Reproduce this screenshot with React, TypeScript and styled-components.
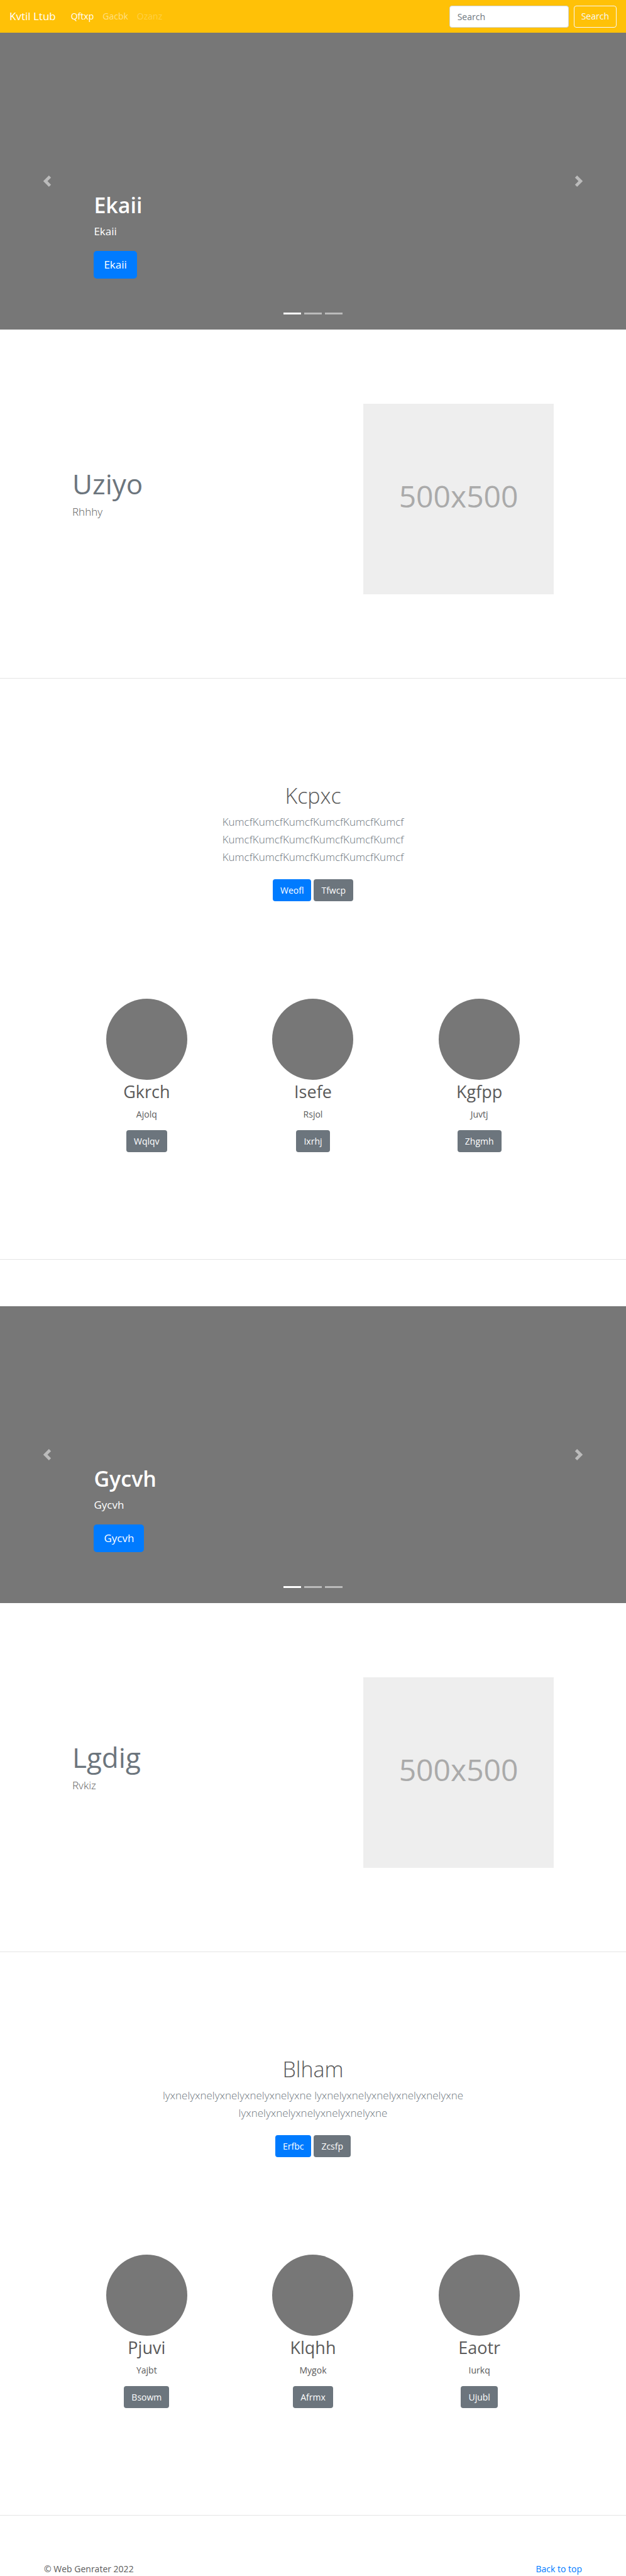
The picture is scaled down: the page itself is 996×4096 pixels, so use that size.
import React from "react";
import styled, { createGlobalStyle } from "styled-components";

const GlobalStyle = createGlobalStyle`
  *, *::before, *::after { box-sizing: border-box; }
  body {
    margin: 0;
    background: #fff;
    color: #5a5a5a;
    font-family: "Open Sans", "Noto Sans", sans-serif;
    font-size: 14px;
    line-height: 22px;
  }
  h1, h2, p { margin: 0; }
  a { text-decoration: none; }
`;

const Navbar = styled.header`
  display: flex;
  align-items: center;
  justify-content: space-between;
  height: 52px;
  padding: 0 15px;
  background: #ffc107;
`;

const NavStart = styled.nav`
  display: flex;
  align-items: center;
  gap: 24px;
`;

const Brand = styled.a`
  color: #fff;
  font-size: 17px;
  line-height: 28px;
`;

const NavLinks = styled.ul`
  display: flex;
  gap: 14px;
  margin: 0;
  padding: 0;
  list-style: none;
`;

const NavLink = styled.a<{ $opacity: number }>`
  color: rgba(255, 255, 255, ${(p) => p.$opacity});
`;

const SearchForm = styled.form`
  display: flex;
  gap: 8px;
`;

const SearchInput = styled.input`
  width: 190px;
  height: 35px;
  padding: 0 12px;
  border: 1px solid #ced4da;
  border-radius: 4px;
  background: #fff;
  color: #495057;
  font: inherit;

  &::placeholder {
    color: #6c757d;
    opacity: 1;
  }
`;

const SearchButton = styled.button`
  height: 35px;
  padding: 0 11px;
  border: 1px solid #f8f9fa;
  border-radius: 4px;
  background: transparent;
  color: #f8f9fa;
  font: inherit;
`;

const Hero = styled.section`
  position: relative;
  display: flex;
  align-items: flex-end;
  height: 472px;
  padding: 0 15% 81px;
  background: #777;
  color: #fff;
`;

const HeroTitle = styled.h1`
  margin-bottom: 6px;
  font-size: 34px;
  font-weight: 600;
  line-height: 44px;
`;

const HeroText = styled.p`
  margin-bottom: 17px;
  font-size: 17px;
  line-height: 28px;
`;

const Arrow = styled.button<{ $side: "left" | "right" }>`
  position: absolute;
  top: 0;
  bottom: 0;
  ${(p) => p.$side}: 0;
  display: flex;
  align-items: center;
  justify-content: center;
  width: 15%;
  padding: 0;
  border: 0;
  background: none;
  color: #fff;
  opacity: 0.5;
`;

const Indicators = styled.div`
  position: absolute;
  right: 0;
  bottom: 24px;
  left: 0;
  display: flex;
  justify-content: center;
  gap: 5px;
`;

const Indicator = styled.button<{ $active: boolean }>`
  width: 28px;
  height: 3px;
  padding: 0;
  border: 0;
  background: #fff;
  opacity: ${(p) => (p.$active ? 1 : 0.5)};
`;

const ActionLink = styled.a<{ $tone?: "primary" | "secondary"; $large?: boolean }>`
  display: inline-block;
  padding: ${(p) => (p.$large ? "8px 16px" : "6px 12px")};
  border-radius: ${(p) => (p.$large ? 5 : 4)}px;
  background: ${(p) => (p.$tone === "secondary" ? "#6c757d" : "#007bff")};
  color: #fff;
  font-size: ${(p) => (p.$large ? 17 : 14)}px;
  line-height: ${(p) => (p.$large ? 28 : 23)}px;
`;

const Container = styled.div`
  max-width: 794px;
  margin: 0 auto;
`;

const Feature = styled(Container).attrs({ as: "section" })`
  display: grid;
  grid-template-columns: minmax(0, 7fr) minmax(0, 5fr);
  align-items: center;
  padding: 118px 0 133px;
`;

const FeatureCopy = styled.div`
  padding: 0 14px 18px;
`;

const FeatureTitle = styled.h2`
  margin-bottom: 3px;
  color: #6c757d;
  font-size: 44px;
  font-weight: 400;
  line-height: 56px;
`;

const FeatureText = styled.p`
  font-size: 17px;
  font-weight: 300;
  line-height: 28px;
`;

const FeatureMedia = styled.div`
  padding: 0 14px;
`;

const Placeholder = styled.div`
  display: flex;
  align-items: center;
  justify-content: center;
  padding-bottom: 8px;
  aspect-ratio: 1;
  background: #eee;
  color: #aaa;
  font-size: 48px;
  line-height: 56px;
`;

const Divider = styled.hr`
  height: 1px;
  margin: 0;
  border: 0;
  background: #e5e5e5;
`;

const Intro = styled.section`
  max-width: 530px;
  margin: 0 auto;
  padding: 164px 0 155px;
  text-align: center;
`;

const IntroTitle = styled.h2`
  margin-bottom: 6px;
  font-size: 34px;
  font-weight: 300;
  line-height: 44px;
`;

const IntroText = styled.p`
  margin-bottom: 21px;
  color: #6c757d;
  font-size: 17px;
  font-weight: 300;
  line-height: 28px;
`;

const IntroActions = styled.div`
  display: flex;
  justify-content: center;
  gap: 4px;
`;

const Cards = styled(Container).attrs({ as: "section" })`
  display: grid;
  grid-template-columns: repeat(3, minmax(0, 1fr));
  padding-bottom: 170px;
`;

const Card = styled.article`
  display: flex;
  flex-direction: column;
  align-items: center;
  text-align: center;
`;

const Avatar = styled.div`
  width: 129px;
  height: 129px;
  border-radius: 50%;
  background: #777;
`;

const CardTitle = styled.h2`
  margin-bottom: 7px;
  font-size: 27px;
  font-weight: 400;
  line-height: 37px;
`;

const CardText = styled.p`
  margin-bottom: 14px;
`;

const Closing = styled.div`
  padding-bottom: 74px;
`;

const Footer = styled.footer`
  display: flex;
  justify-content: space-between;
  max-width: 856px;
  margin: 0 auto;
`;

const FooterLink = styled.a`
  color: #007bff;
`;

interface Block {
  hero: string;
  feature: { title: string; text: string };
  intro: { title: string; text: string; primary: string; secondary: string };
  cards: { title: string; text: string; action: string }[];
}

const blocks: Block[] = [
  {
    hero: "Ekaii",
    feature: { title: "Uziyo", text: "Rhhhy" },
    intro: {
      title: "Kcpxc",
      text: "KumcfKumcfKumcfKumcfKumcfKumcf KumcfKumcfKumcfKumcfKumcfKumcf KumcfKumcfKumcfKumcfKumcfKumcf",
      primary: "Weofl",
      secondary: "Tfwcp",
    },
    cards: [
      { title: "Gkrch", text: "Ajolq", action: "Wqlqv" },
      { title: "Isefe", text: "Rsjol", action: "Ixrhj" },
      { title: "Kgfpp", text: "Juvtj", action: "Zhgmh" },
    ],
  },
  {
    hero: "Gycvh",
    feature: { title: "Lgdig", text: "Rvkiz" },
    intro: {
      title: "Blham",
      text: "lyxnelyxnelyxnelyxnelyxnelyxne lyxnelyxnelyxnelyxnelyxnelyxne lyxnelyxnelyxnelyxnelyxnelyxne",
      primary: "Erfbc",
      secondary: "Zcsfp",
    },
    cards: [
      { title: "Pjuvi", text: "Yajbt", action: "Bsowm" },
      { title: "Klqhh", text: "Mygok", action: "Afrmx" },
      { title: "Eaotr", text: "Iurkq", action: "Ujubl" },
    ],
  },
];

const chevrons = {
  left: "M5.25 0l-4 4 4 4 1.5-1.5-2.5-2.5 2.5-2.5-1.5-1.5z",
  right: "M2.75 0l-1.5 1.5 2.5 2.5-2.5 2.5 1.5 1.5 4-4-4-4z",
};

function Chevron({ side }: { side: "left" | "right" }) {
  return (
    <svg width="18" height="18" viewBox="0 0 8 8" fill="currentColor" aria-hidden="true">
      <path d={chevrons[side]} />
    </svg>
  );
}

function Carousel({ label }: { label: string }) {
  return (
    <Hero>
      <div>
        <HeroTitle>{label}</HeroTitle>
        <HeroText>{label}</HeroText>
        <ActionLink href="#" $large>{label}</ActionLink>
      </div>
      <Arrow type="button" $side="left" aria-label="Previous"><Chevron side="left" /></Arrow>
      <Arrow type="button" $side="right" aria-label="Next"><Chevron side="right" /></Arrow>
      <Indicators>
        {[0, 1, 2].map((i) => (
          <Indicator key={i} type="button" $active={i === 0} aria-label={`Slide ${i + 1}`} />
        ))}
      </Indicators>
    </Hero>
  );
}

function PageBlock({ block }: { block: Block }) {
  const { hero, feature, intro, cards } = block;
  return (
    <>
      <Carousel label={hero} />
      <Feature>
        <FeatureCopy>
          <FeatureTitle>{feature.title}</FeatureTitle>
          <FeatureText>{feature.text}</FeatureText>
        </FeatureCopy>
        <FeatureMedia>
          <Placeholder>500x500</Placeholder>
        </FeatureMedia>
      </Feature>
      <Divider />
      <Intro>
        <IntroTitle>{intro.title}</IntroTitle>
        <IntroText>{intro.text}</IntroText>
        <IntroActions>
          <ActionLink href="#">{intro.primary}</ActionLink>
          <ActionLink href="#" $tone="secondary">{intro.secondary}</ActionLink>
        </IntroActions>
      </Intro>
      <Cards>
        {cards.map((card) => (
          <Card key={card.title}>
            <Avatar />
            <CardTitle>{card.title}</CardTitle>
            <CardText>{card.text}</CardText>
            <ActionLink href="#" $tone="secondary">{card.action}</ActionLink>
          </Card>
        ))}
      </Cards>
      <Closing>
        <Divider />
      </Closing>
    </>
  );
}

export default function App() {
  return (
    <>
      <GlobalStyle />
      <Navbar>
        <NavStart>
          <Brand href="#">Kvtil Ltub</Brand>
          <NavLinks>
            <li><NavLink href="#" $opacity={1}>Qftxp</NavLink></li>
            <li><NavLink href="#" $opacity={0.5}>Gacbk</NavLink></li>
            <li><NavLink href="#" $opacity={0.25}>Ozanz</NavLink></li>
          </NavLinks>
        </NavStart>
        <SearchForm role="search">
          <SearchInput type="search" placeholder="Search" aria-label="Search" />
          <SearchButton type="button">Search</SearchButton>
        </SearchForm>
      </Navbar>
      <main>
        {blocks.map((block) => (
          <PageBlock key={block.hero} block={block} />
        ))}
      </main>
      <Footer>
        <p>© Web Genrater 2022</p>
        <FooterLink href="#">Back to top</FooterLink>
      </Footer>
    </>
  );
}
